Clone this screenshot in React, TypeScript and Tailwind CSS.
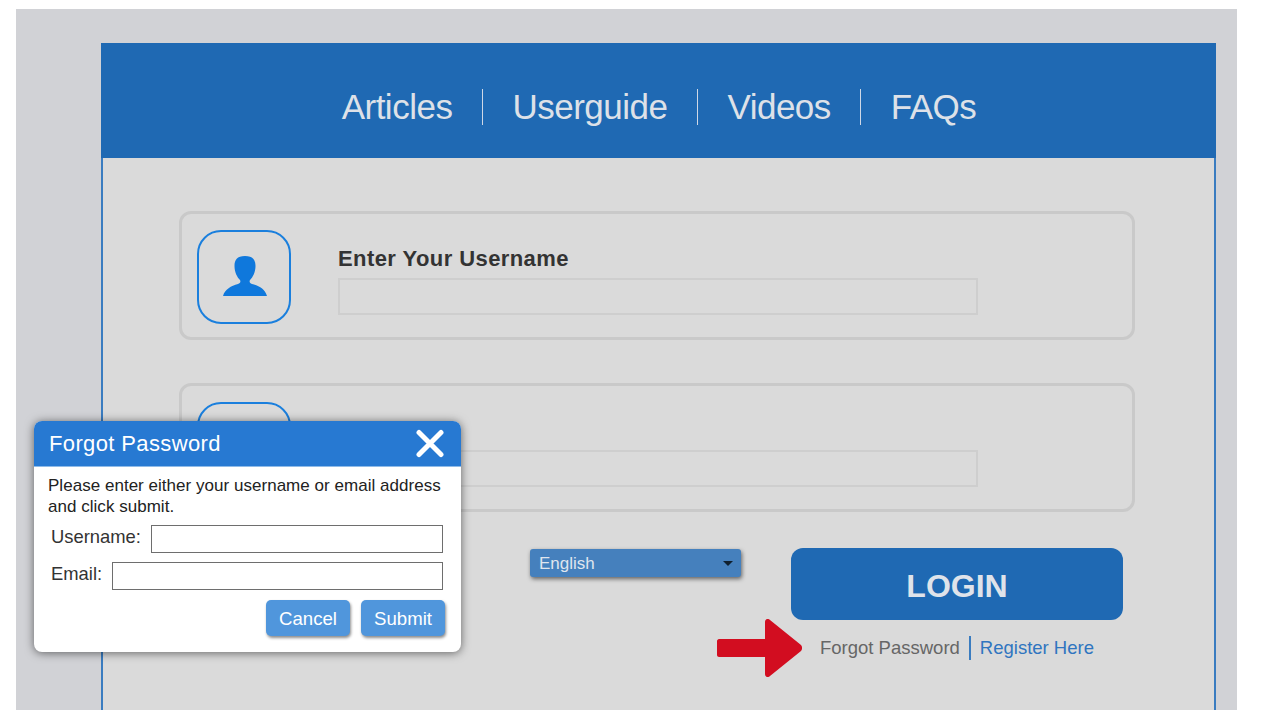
import { ReactNode } from "react";

const navItems = ["Articles", "Userguide", "Videos", "FAQs"];

// Linha de campo (ícone + label + input)
const FieldCard = ({ label, icon }: { label?: string; icon?: ReactNode }) => (
  <div className="flex h-[129px] w-[956px] items-start rounded-[12px] border-[3px] border-[#c9c9c9] pl-[15px] pt-[16px]">
    <div className="flex h-[94px] w-[94px] shrink-0 items-center justify-center rounded-[24px] border-[2.500px] border-[#1a7fdd]">
      {icon}
    </div>
    <div className="ml-[47px] flex flex-col">
      <div className="mt-[13px] h-[32px] text-[22px] font-bold leading-[32px] tracking-[0.420px] text-[#333333]">{label}</div>
      <div className="mt-[3px] h-[37px] w-[640px] border-2 border-[#cecece]" />
    </div>
  </div>
);

const PersonIcon = () => (
  <svg className="mb-[2px] ml-[1px]" width="44" height="40" viewBox="0 0 44 40" fill="#0f78dc">
    <path d="M22 0C14 0 11.500 4 11.500 10C11.500 16 14 21 17 24C18 26 17 27 15 28C8 30 2 33 0 40H44C42 33 36 30 29 28C27 27 26 26 27 24C30 21 32.500 16 32.500 10C32.500 4 30 0 22 0z" />
  </svg>
);

const ForgotPasswordDialog = () => (
  <div className="absolute left-[34px] top-[421px] flex h-[231px] w-[427px] flex-col overflow-hidden rounded-[8px] bg-white font-['Liberation_Sans',sans-serif] shadow-[0_1px_10px_rgba(0,0,0,0.55)]">
    <div className="flex h-[46px] shrink-0 items-center justify-between border-b border-[#8fbbe8] bg-[#2779d2] pl-[15px] pr-[16px]">
      <span className="text-[22px] tracking-[0.370px] text-white">Forgot Password</span>
      <svg width="30" height="30" viewBox="0 0 30 30" stroke="white" strokeWidth="5" strokeLinecap="round">
        <path d="M4 3.500 26 25.500M26 3.500 4 25.500" />
      </svg>
    </div>
    <p className="mt-[8px] px-[14px] text-[17px] leading-[21px] tracking-[0.030px] text-[#222222]">
      Please enter either your username or email address and click submit.
    </p>
    <div className="mt-[8px] flex h-[28px] items-center pl-[17px] pr-[18px]">
      <span className="mb-[4px] mr-[10px] text-[18.400px] text-[#333333]">Username:</span>
      <div className="h-full flex-1 border border-[#6e6e6e]" />
    </div>
    <div className="mt-[9px] flex h-[28px] items-center pl-[17px] pr-[18px]">
      <span className="mb-[4px] mr-[10px] text-[18.400px] text-[#333333]">Email:</span>
      <div className="h-full flex-1 border border-[#6e6e6e]" />
    </div>
    <div className="mt-[10px] flex justify-end gap-[11px] pr-[16px]">
      <button className="h-[36px] w-[84px] rounded-[5px] bg-[#5096dc] pt-[1px] text-[18.600px] text-white shadow-[1px_2px_3px_rgba(0,0,0,0.45)]">Cancel</button>
      <button className="h-[36px] w-[84px] rounded-[5px] bg-[#5096dc] pt-[1px] text-[18.600px] text-white shadow-[1px_2px_3px_rgba(0,0,0,0.45)]">Submit</button>
    </div>
  </div>
);

const App = () => {
  return (
    <div className="relative h-[720px] w-[1280px] overflow-hidden bg-white font-['Liberation_Sans',sans-serif]">
      <div className="ml-[16px] mt-[9px] h-[701px] w-[1221px] overflow-hidden bg-[#d1d2d6] pl-[85px] pt-[34px]">
        <div className="h-[667px] w-[1115px] border-x-2 border-x-[#3a7cc0] bg-[#dadada]">
          <nav className="-mx-[2px] flex h-[115px] items-center justify-center bg-[#1f69b3] pl-[1px] pt-[12px]">
            {navItems.map((item, i) => (
              <div key={item} className="flex items-center">
                {i > 0 && <div className="mx-[29.500px] h-[36px] w-px bg-[#cfd8e6]" />}
                <span className="text-[35px] leading-[40px] tracking-[-0.500px] text-[#dde1e8]">{item}</span>
              </div>
            ))}
          </nav>
          <div className="pl-[76px] pt-[53px]">
            <FieldCard label="Enter Your Username" icon={<PersonIcon />} />
            <div className="mt-[43px]">
              <FieldCard />
            </div>
            <div className="mt-[36px] flex items-start">
              <div className="ml-[351px] mt-[1px] flex h-[28px] w-[211px] items-center justify-between rounded-[3px] bg-[#4580bd] pl-[9px] pr-[8px] pt-[1px] text-[17px] text-[#dfe5ee] shadow-[1px_2px_4px_rgba(0,0,0,0.55)]">
                <span>English</span>
                <span className="h-0 w-0 border-x-[5px] border-t-[5px] border-x-transparent border-t-[#10202f]" />
              </div>
              <div className="ml-[50px] flex w-[332px] flex-col items-center">
                <button className="h-[72px] w-full rounded-[12px] bg-[#1f69b3] pt-[3px] text-[32px] font-bold text-[#dfe3ea]">LOGIN</button>
                <div className="relative mt-[16px] flex h-[24px] items-center text-[18.500px]">
                  <svg className="absolute left-[-103px] top-[-17px]" width="85" height="58" viewBox="0 0 85 58" fill="#d20d20">
                    <path d="M2 20h46V3c0-3 3-4 5-2l31 25c1.500 2 1.500 4 0 6L53 57c-2 2-5 1-5-2V38H2c-1 0-2-1-2-2V22c0-1 1-2 2-2z" />
                  </svg>
                  <span className="pr-[9px] text-[#666666]">Forgot Password</span>
                  <span className="border-l-2 border-l-[#3a7cc0] pl-[9px] leading-[24px] text-[#2f75c0]">Register Here</span>
                </div>
              </div>
            </div>
          </div>
        </div>
      </div>
      <ForgotPasswordDialog />
    </div>
  );
};

export default App;
